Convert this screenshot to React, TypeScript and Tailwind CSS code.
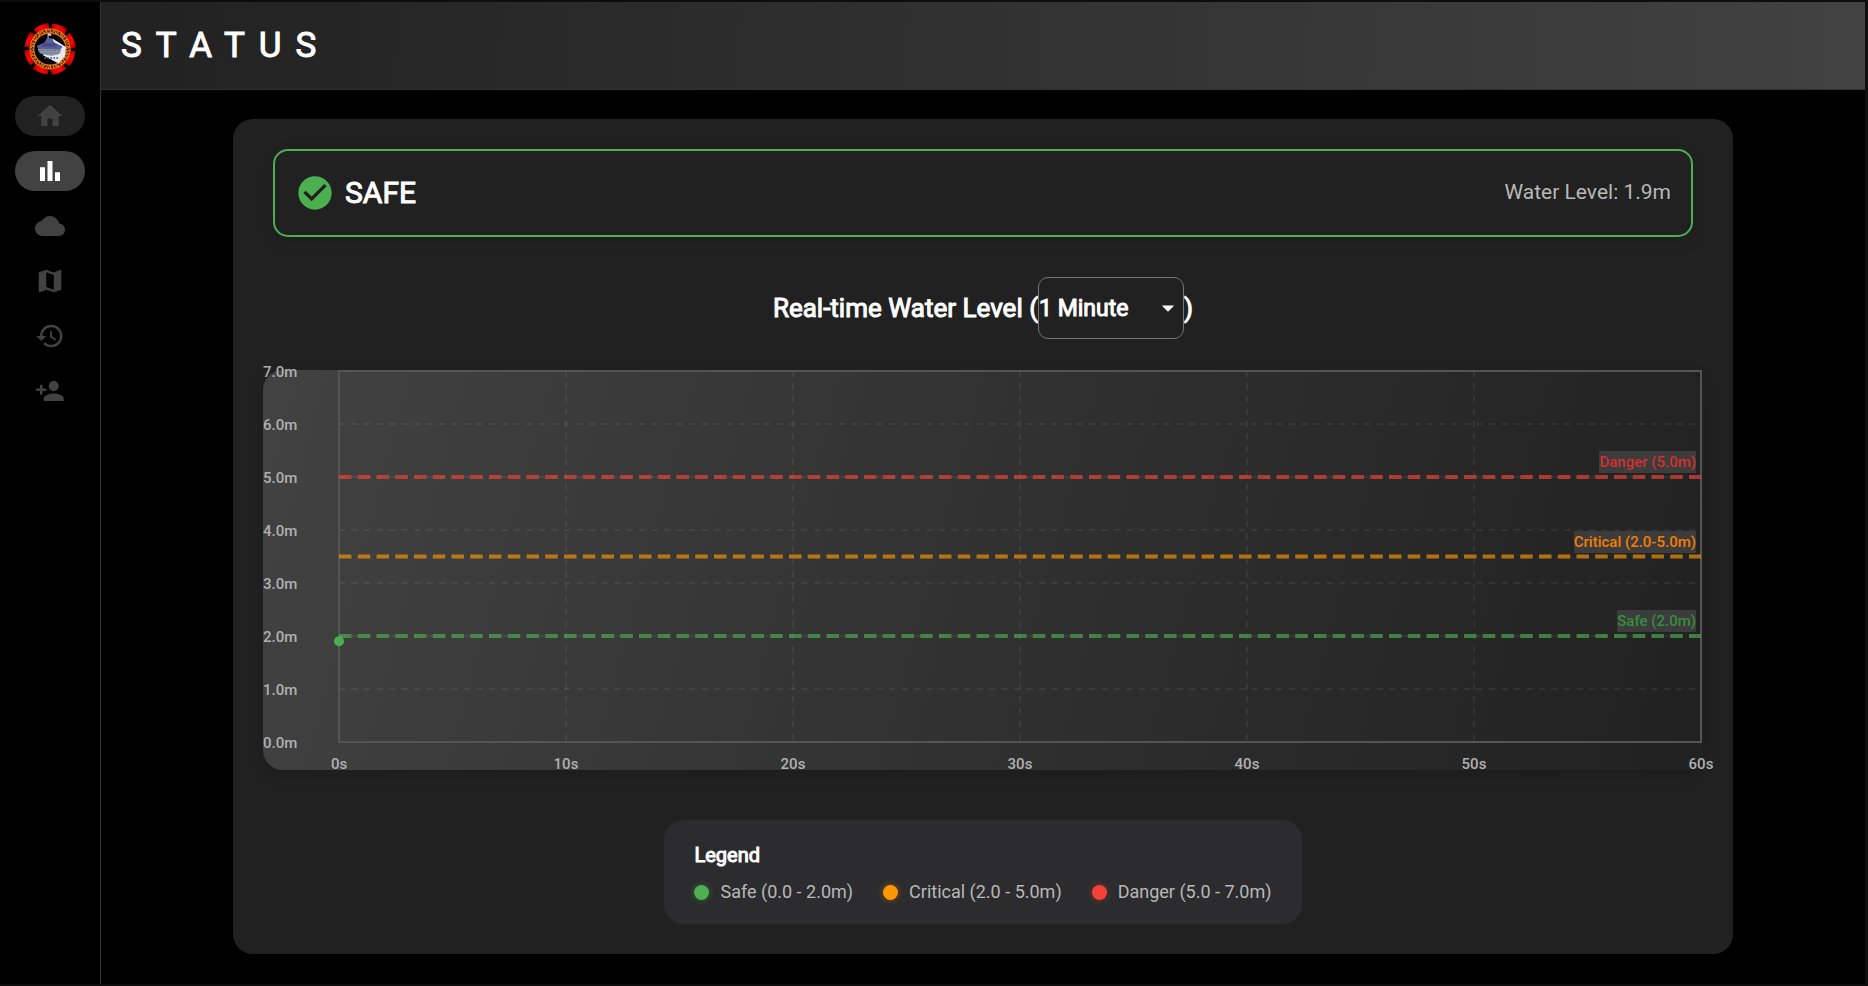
import { useState } from "react";
import type { IconType } from "react-icons";
import {
  MdArrowDropDown,
  MdBarChart,
  MdCheckCircle,
  MdCloud,
  MdHistory,
  MdHome,
  MdMap,
  MdPersonAdd,
} from "react-icons/md";

const NAV: { label: string; icon: IconType; style: string }[] = [
  { label: "Home", icon: MdHome, style: "bg-[#212121] text-[#424242]" },
  { label: "Status", icon: MdBarChart, style: "bg-[#424242] text-white" },
  { label: "Weather", icon: MdCloud, style: "text-[#424242]" },
  { label: "Map", icon: MdMap, style: "text-[#424242]" },
  { label: "History", icon: MdHistory, style: "text-[#424242]" },
  { label: "Add person", icon: MdPersonAdd, style: "text-[#424242]" },
];

const MAX_LEVEL = 7;
const LEVELS = [7, 6, 5, 4, 3, 2, 1, 0];
const SECONDS = [0, 10, 20, 30, 40, 50, 60];
const CURRENT_LEVEL = 1.9;

const THRESHOLDS = [
  { label: "Danger (5.0m)", level: 5, line: "#f44336", text: "text-[#d32f2f]" },
  { label: "Critical (2.0-5.0m)", level: 3.5, line: "#ff9800", text: "text-[#f57c00]" },
  { label: "Safe (2.0m)", level: 2, line: "#4caf50", text: "text-[#388e3c]" },
];

const LEGEND = [
  { label: "Safe (0.0 - 2.0m)", dot: "bg-[#4caf50] shadow-[0_0_6px_#4caf5066]" },
  { label: "Critical (2.0 - 5.0m)", dot: "bg-[#ff9800] shadow-[0_0_6px_#ff980066]" },
  { label: "Danger (5.0 - 7.0m)", dot: "bg-[#f44336] shadow-[0_0_6px_#f4433666]" },
];

const yOf = (level: number) => `${((MAX_LEVEL - level) / MAX_LEVEL) * 100}%`;
const xOf = (second: number) => `${(second / 60) * 100}%`;

function Logo() {
  return (
    <svg viewBox="0 0 52 52" className="size-[52px]" role="img" aria-label="Logo">
      <defs>
        <linearGradient id="lobe" x1="0" y1="1" x2="1" y2="0">
          <stop offset="0" stopColor="#8a0000" />
          <stop offset="0.45" stopColor="#ff0808" />
          <stop offset="0.7" stopColor="#e80000" />
          <stop offset="1" stopColor="#8a0000" />
        </linearGradient>
      </defs>
      {[0, 1, 2, 3, 4, 5, 6, 7].map((i) => (
        <path
          key={i}
          d="M13.5 11 L9.8 6.6 Q16 1.4 24.2 0 L25.4 5 L25.4 8 Z"
          fill="url(#lobe)"
          transform={`rotate(${i * 45} 26 26)`}
        />
      ))}
      <circle cx="26" cy="26" r="20.8" fill="#a80000" />
      <circle cx="26" cy="26" r="18" fill="#000" stroke="#f07c1e" strokeWidth="4.8" />
      <circle cx="26" cy="26" r="18.6" fill="none" stroke="#4a2204" strokeWidth="2" strokeDasharray="1 1.3 2 1.6 0.8 1.1" />
      <circle cx="26" cy="26" r="17.2" fill="none" stroke="#3a1a02" strokeWidth="1.4" strokeDasharray="1.6 2.2 0.8 1.4" />
      <path d="M28.5 15.5 L42 24 L41 33 L34.5 40.5 L18.5 32 L27 26 Z" fill="#e8e8ee" />
      <path d="M24 10 L27.5 11 L27 13 L24.6 12.6 V16 H23.6 V10 Z" fill="#c8c8d8" />
      <path d="M12.5 23 L20.5 19.5 L22.6 15.4 L27.5 15 L30.5 19.5 L38.5 23.5 L36 27 L15 27 Z" fill="#5b5c9c" />
      <path d="M20 20.5 L30.5 20 L34 23.5 L17 23.5 Z" fill="#474a86" />
      <path d="M13.5 26 L37.5 26.5 L35.5 31 L27 33 L16 30.5 Z" fill="#8d9aa6" />
      <path d="M15 27.6 H36 M17 30 H34" stroke="#4f6f74" strokeWidth="0.9" strokeDasharray="1.6 1" />
      <path d="M20.5 35 H34.5" stroke="#5566a8" strokeWidth="2" strokeDasharray="1.4 1.6" />
    </svg>
  );
}

function Sidebar() {
  return (
    <aside className="flex w-[101px] shrink-0 flex-col items-center border-r border-[#333] bg-black pt-[21px]">
      <Logo />
      <nav className="mt-[21px] flex flex-col gap-[15px]">
        {NAV.map(({ label, icon: Icon, style }) => (
          <button
            key={label}
            type="button"
            aria-label={label}
            className={`flex h-10 w-[70px] items-center justify-center rounded-full ${style}`}
          >
            <Icon size={30} />
          </button>
        ))}
      </nav>
    </aside>
  );
}

function Chart() {
  return (
    <div className="mt-[31px] h-[400px] rounded-[20px] bg-linear-105 from-[#424242] to-[#212121] pt-px pr-0.5 pb-7 pl-[76px] shadow-[0_5px_15px_rgba(0,0,0,0.15)]">
      <div className="relative h-full">
        <svg
          className="block h-full w-full overflow-visible text-[15px] font-medium"
          role="img"
          aria-label="Water level over one minute"
        >
          {LEVELS.map((level) => (
            <g key={level}>
              {level > 0 && level < MAX_LEVEL && (
                <line
                  x1="0"
                  x2="100%"
                  y1={yOf(level)}
                  y2={yOf(level)}
                  stroke="#fff"
                  strokeOpacity="0.13"
                  strokeDasharray="6.25"
                />
              )}
              <text x="-76" y={yOf(level)} dy="6" fill="#b0b0b0">
                {level.toFixed(1)}m
              </text>
            </g>
          ))}
          {SECONDS.map((second) => (
            <g key={second}>
              {second > 0 && second < 60 && (
                <line
                  x1={xOf(second)}
                  x2={xOf(second)}
                  y1="0"
                  y2="100%"
                  stroke="#fff"
                  strokeOpacity="0.13"
                  strokeDasharray="6.25"
                />
              )}
              <text x={xOf(second)} y="100%" dy="27" textAnchor="middle" fill="#b0b0b0">
                {second}s
              </text>
            </g>
          ))}
          <rect width="100%" height="100%" fill="none" stroke="#545454" strokeWidth="2" />
          {THRESHOLDS.map(({ label, level, line }) => (
            <line
              key={label}
              x1="0"
              x2="100%"
              y1={yOf(level)}
              y2={yOf(level)}
              stroke={line}
              strokeOpacity="0.65"
              strokeWidth="4"
              strokeDasharray="12.5 6.25"
            />
          ))}
          <circle cx="0" cy={yOf(CURRENT_LEVEL)} r="5" fill="#4caf50" />
        </svg>
        {THRESHOLDS.map(({ label, level, text }) => (
          <span
            key={label}
            className={`absolute right-[5px] -mt-[26px] bg-[#3c3c3c] text-[15px] leading-[22px] font-medium ${text}`}
            style={{ top: yOf(level) }}
          >
            {label}
          </span>
        ))}
      </div>
    </div>
  );
}

export default function App() {
  const [range, setRange] = useState("1 Minute");

  return (
    <div className="flex min-h-screen bg-[#0d0d0d] py-0.5 pr-[3px] font-['Roboto',sans-serif]">
      <Sidebar />
      <div className="flex min-w-0 flex-1 flex-col bg-black">
        <header className="flex h-[88px] items-center border-b border-[#333] bg-linear-93 from-[#212121] to-[#424242] px-5">
          <h1 className="text-[35px] leading-[42px] tracking-[14px] text-white [-webkit-text-stroke:1px_white]">
            STATUS
          </h1>
        </header>
        <main className="flex justify-center px-8 pt-[29px] pb-[30px]">
          <section className="w-full max-w-[1500px] rounded-[20px] bg-[#212121] px-[30px] py-[30px]">
            <div className="mx-[10px] flex h-[88px] items-center justify-between rounded-[15px] border-2 border-[#4caf50] px-5 shadow-[0_5px_15px_rgba(0,0,0,0.1)]">
              <div className="flex items-center gap-[10px]">
                <MdCheckCircle size={40} className="text-[#4caf50]" />
                <h2 className="text-[30px] leading-9 text-white [-webkit-text-stroke:1px_white]">SAFE</h2>
              </div>
              <p className="text-[21px] text-[#b8b8b8]">Water Level: 1.9m</p>
            </div>

            <div className="mt-10 flex items-center justify-center text-[26px] text-white [-webkit-text-stroke:1px_white]">
              <label htmlFor="range">Real-time Water Level (</label>
              <div className="relative">
                <select
                  id="range"
                  value={range}
                  onChange={(e) => setRange(e.target.value)}
                  className="block h-[62px] w-[146px] appearance-none rounded-[10px] border border-[#757575] bg-[#212121] pt-0.5 text-[23px] text-white"
                >
                  <option>1 Minute</option>
                  <option>1 Hour</option>
                  <option>1 Day</option>
                </select>
                <MdArrowDropDown size={30} className="pointer-events-none absolute top-4 right-px [stroke-width:0]" />
              </div>
              <span>)</span>
            </div>

            <Chart />

            <div className="mx-auto mt-[50px] w-fit rounded-[20px] bg-[#2c2c2e] px-[30px] pt-[21px] pb-5">
              <h3 className="text-xl leading-7 text-white [-webkit-text-stroke:1px_white]">Legend</h3>
              <ul className="mt-[11px] flex gap-[30px]">
                {LEGEND.map(({ label, dot }) => (
                  <li key={label} className="flex items-center gap-[11px] text-lg leading-6 text-[#b8b8b8]">
                    <span className={`size-[15px] rounded-full ${dot}`} />
                    {label}
                  </li>
                ))}
              </ul>
            </div>
          </section>
        </main>
      </div>
    </div>
  );
}
